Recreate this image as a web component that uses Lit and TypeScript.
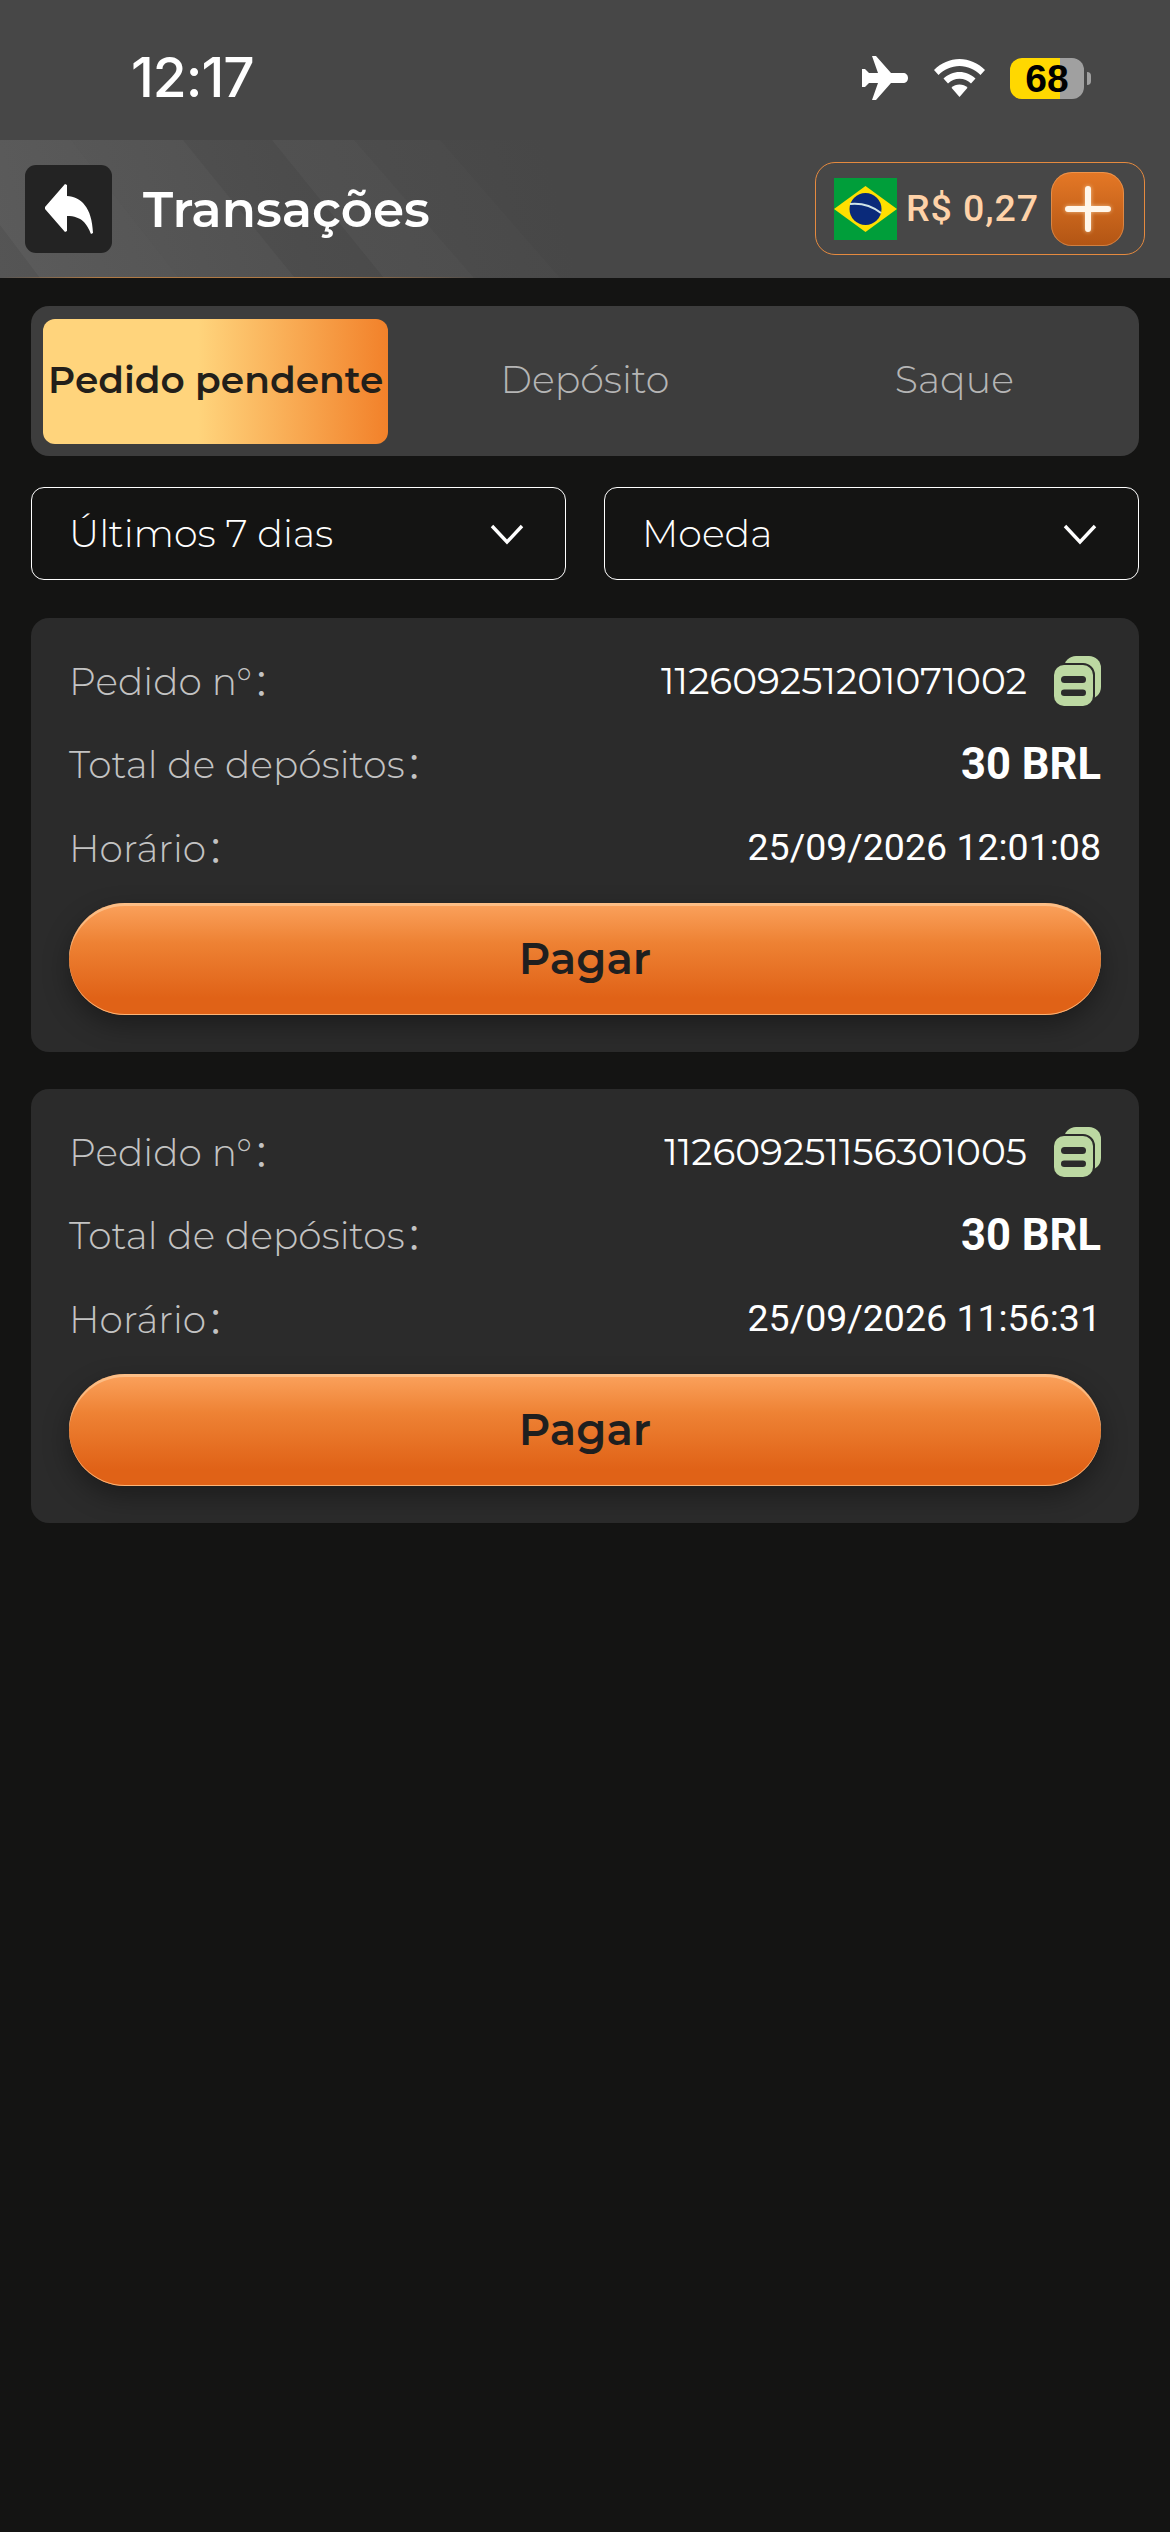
import { LitElement, html, css } from "lit";
import { customElement } from "lit/decorators.js";

const copyIcon = html`<svg class="copy" viewBox="0 0 47 50"><rect x="10" y="0" width="37" height="43" rx="12" fill="#bcd8a2"/><rect x="0" y="9" width="39" height="41" rx="10" fill="#bcd8a2" stroke="#2b2b2b" stroke-width="4" paint-order="stroke"/><rect x="7" y="20" width="25" height="7" rx="3.5" fill="#2b2b2b"/><rect x="7" y="33.5" width="25" height="6.500" rx="3.2" fill="#2b2b2b"/></svg>`;
const chevron = html`<svg class="chev" viewBox="0 0 34 22"><path d="M2 3l15 16L32 3" fill="none" stroke="#fff" stroke-width="3.4"/></svg>`;

const orders = [
  { id: "112609251201071002", time: "25/09/2026 12:01:08" },
  { id: "112609251156301005", time: "25/09/2026 11:56:31" },
];

@customElement("app-root")
export class AppRoot extends LitElement {
  static styles = css`
    :host { display: block; width: 1170px; height: 2532px; background: #141413; font-family: "Montserrat", "Inter", "Noto Sans CJK SC", sans-serif; color: #fff; overflow: hidden; }
    .top { background: #474747; height: 278px; display: flex; flex-direction: column; position: relative; }
    .status { height: 140px; flex: none; display: flex; align-items: center; padding: 17px 79px 0 131px; box-sizing: border-box; justify-content: space-between; }
    .time { font: 500 55px/1 Inter, sans-serif; letter-spacing: -1px; margin-top: -2px; }
    .status-icons { display: flex; align-items: center; margin-top: -1px; }
    .plane { width: 46px; height: 46px; margin-right: 26px; }
    .wifi { width: 51px; height: 38px; margin-right: 25px; }
    .batt { display: flex; align-items: center; }
    .batt-body { width: 74px; height: 41px; border-radius: 12px; background: linear-gradient(90deg, #ffd800 68%, #a0a0a0 68%); color: #000; font: 700 39px/41px "Liberation Sans", sans-serif; text-align: center; }
    .batt-nub { width: 4px; height: 13px; margin-left: 3px; background: #a0a0a0; border-radius: 0 5px 5px 0; }
    .nav { flex: 1; position: relative; display: flex; align-items: flex-start; padding: 25px 25px 0 25px; box-sizing: border-box; background: linear-gradient(75deg, #555 0, #4c4c4c 300px, #474747 560px); }
    .nav::after { content: ""; position: absolute; left: 0; right: 0; bottom: 0; height: 1px; background: linear-gradient(90deg, transparent 0, #b07a45 100px, #b07a45 300px, transparent 480px); }
    .stripes { position: absolute; left: 0; top: 0; width: 600px; height: 138px; }
    .back { position: relative; width: 87px; height: 88px; border-radius: 11px; background: #232323; display: flex; align-items: center; justify-content: center; }
    .back svg { width: 50px; height: 50px; }
    .title { position: relative; font: 600 50px/90px Montserrat, sans-serif; margin-left: 31px; flex: 1; }
    .bal { position: relative; margin-top: -3px; width: 330px; height: 93px; box-sizing: border-box; border: 1.5px solid #e58a3f; border-radius: 20px; display: flex; align-items: center; padding: 0 20px 0 18px; }
    .flag { width: 63px; height: 62px; flex: none; }
    .amount { font: 500 37.5px/1 Roboto, sans-serif; color: #ffd2a8; margin-left: 9px; flex: 1; white-space: nowrap; letter-spacing: 0.9px; }
    .plus { width: 73px; height: 74px; border-radius: 21px; background: linear-gradient(180deg, #e57826, #b25514); box-shadow: inset 0 0 0 1px rgba(255,190,130,.4); display: flex; align-items: center; justify-content: center; }
    .plus svg { width: 46px; height: 46px; filter: drop-shadow(0 0 2px rgba(255,225,180,.7)); }
    .content { padding: 28px 31px 0; display: flex; flex-direction: column; }
    .tabs { height: 150px; box-sizing: border-box; background: #3d3d3d; border-radius: 18px; display: grid; grid-template-columns: 1fr 1fr 1fr; }
    .tab { display: flex; align-items: center; justify-content: center; font-size: 38px; color: #b5b5b5; font-weight: 300; white-space: nowrap; border-radius: 12px; padding-bottom: 3px; }
    .tab.on { margin: 13px 12px 12px; padding-bottom: 5px; background: linear-gradient(90deg, #ffd47c 0, #ffd47c 45%, #f2812a 100%); color: #231f1a; font-weight: 600; font-size: 37.5px; }
    .selects { display: grid; grid-template-columns: 1fr 1fr; gap: 38px; margin-top: 31px; }
    .sel { height: 93px; box-sizing: border-box; border: 1.5px solid #fff; border-radius: 13px; display: flex; align-items: center; justify-content: space-between; padding: 0 41px 0 37px; font-size: 38px; font-weight: 300; }
    .chev { width: 34px; height: 22px; }
    .card { height: 434px; box-sizing: border-box; margin-top: 38px; border-radius: 18px; background: #2b2b2b; padding: 31px 38px 0; display: flex; flex-direction: column; }
    .card + .card { margin-top: 37px; }
    .row { height: 64px; margin-bottom: 19.5px; display: flex; align-items: center; justify-content: space-between; font-size: 37.5px; font-weight: 300; color: #c3c3c3; }
    .label { line-height: 44px; padding-top: 1px; letter-spacing: 0.1px; }
    .val { font: 400 37.5px/1 Roboto, sans-serif; color: #fff; display: flex; align-items: center; }
    .val.id { font: 400 37.5px/1 Montserrat, sans-serif; }
    .val.big { font-weight: 700; font-size: 43.5px; padding-top: 1px; }
    .copy { width: 47px; height: 50px; margin-left: 27px; overflow: hidden; }
    .pay { margin-top: 3px; height: 112px; border-radius: 56px; background: linear-gradient(180deg, #fba25d 0, #ee8234 35%, #e06217 85%, #e06217 100%); box-shadow: inset 0 3px 0 rgba(255,215,170,.55), inset 0 -1px 0 rgba(255,190,130,.9), 0 10px 26px rgba(0,0,0,.35); display: flex; align-items: center; justify-content: center; color: #1f1f1f; font-weight: 600; font-size: 43.5px; }
  `;

  render() {
    return html`
      <div class="top">
        <div class="status">
          <span class="time">12:17</span>
          <div class="status-icons">
            <svg class="plane" viewBox="0 0 46 46"><path fill="#fff" d="M10 1h4l15 17h12c3 0 5 2 5 5s-2 5-5 5H29L14 45h-4l6-17H7l-4 4H0V14h3l4 4h9z"/></svg>
            <svg class="wifi" viewBox="0 0 51 38"><path fill="#fff" d="M25.500 0C35 0 44 4 51 11l-4.500 5C41 10.500 33.500 7 25.500 7S10 10.500 4.500 16L0 11C7 4 16 0 25.500 0z"/><path fill="#fff" d="M25.500 13c6 0 11.500 2.500 16 6.500L37 24.500c-3-3-7-4.700-11.500-4.700S17 21.500 14 24.500l-4.500-5C14 15.500 19.500 13 25.500 13z"/><path fill="#fff" d="M25.500 25.500c3 0 6 1.200 8 3.200L25.500 38l-8-9.300c2-2 5-3.200 8-3.200z"/></svg>
            <div class="batt"><div class="batt-body">68</div><div class="batt-nub"></div></div>
          </div>
        </div>
        <div class="nav">
          <svg class="stripes" viewBox="0 0 600 138"><polygon fill="#fff" opacity=".04" points="0,0 71,0 179,138 40,138 0,85"/><polygon fill="#fff" opacity=".03" points="71,0 183,0 295,138 179,138"/><polygon fill="#fff" opacity=".03" points="272,0 354,0 474,138 384,138"/><polygon fill="#fff" opacity=".016" points="354,0 440,0 560,138 474,138"/></svg>
          <div class="back"><svg viewBox="0 0 50 50"><path fill="#fff" d="M21 0l2 1v11c14 1 25 11 26 37l-2 1c-4-10-9-18-24-18v15l-2 1L1 25v-2z"/></svg></div>
          <div class="title">Transações</div>
          <div class="bal">
            <svg class="flag" viewBox="0 0 63 62"><rect width="63" height="62" fill="#009e3a"/><polygon points="31.500,8 63,31 31.500,54 0,31" fill="#ffdf00"/><circle cx="31.500" cy="31" r="16" fill="#0a2a7a"/><path d="M16 26c10-1 22 2 31 9" stroke="#cfe3e8" stroke-width="2.200" fill="none"/></svg>
            <span class="amount">R$ 0,27</span>
            <div class="plus"><svg viewBox="0 0 46 46"><path d="M23 3v40M3 23h40" stroke="#fff6ea" stroke-width="6" stroke-linecap="round"/></svg></div>
          </div>
        </div>
      </div>
      <div class="content">
        <div class="tabs">
          <div class="tab on">Pedido pendente</div>
          <div class="tab">Depósito</div>
          <div class="tab">Saque</div>
        </div>
        <div class="selects">
          <div class="sel"><span>Últimos 7 dias</span>${chevron}</div>
          <div class="sel"><span>Moeda</span>${chevron}</div>
        </div>
        ${orders.map((o) => html`
          <div class="card">
            <div class="row"><span class="label" lang="zh-CN">Pedido n°：</span><span class="val id">${o.id}${copyIcon}</span></div>
            <div class="row"><span class="label" lang="zh-CN">Total de depósitos：</span><span class="val big">30 BRL</span></div>
            <div class="row"><span class="label" lang="zh-CN">Horário：</span><span class="val">${o.time}</span></div>
            <div class="pay">Pagar</div>
          </div>`)}
      </div>
    `;
  }
}
